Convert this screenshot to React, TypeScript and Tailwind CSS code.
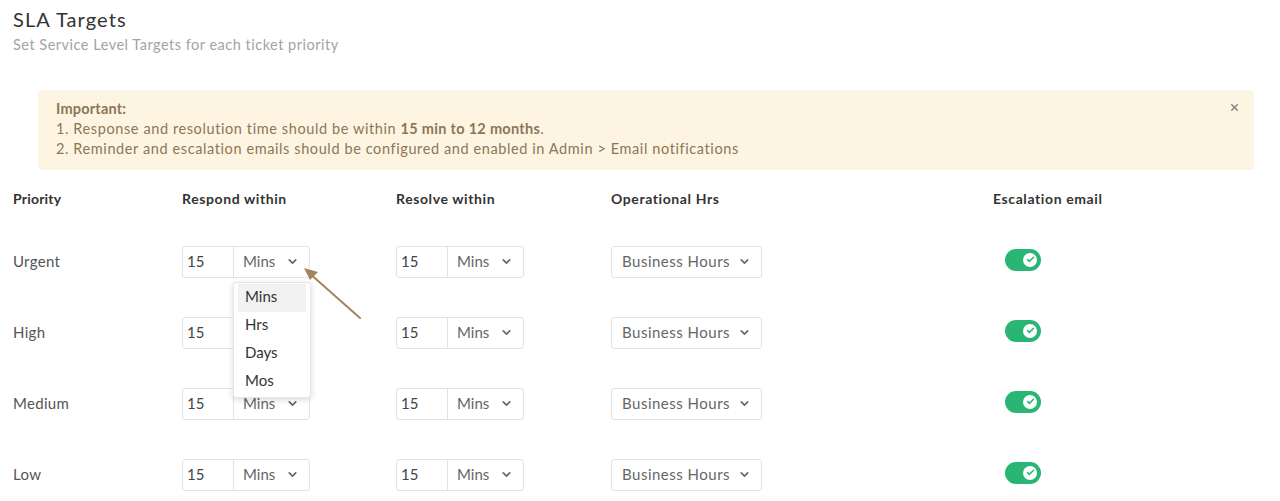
import React from 'react';
import { ChevronDown, X, Check } from 'lucide-react';

const rows = ['Urgent', 'High', 'Medium', 'Low'];

function UnitInput({ open = false }: { open?: boolean }) {
  return (
    <div className="relative flex h-[32px] w-[128px] rounded-[3px] border border-[#e3e3e3] bg-white">
      <div className="flex w-[51px] items-center border-r border-[#e3e3e3] pl-[4px] text-[15px] text-[#444]">15</div>
      <div className="flex flex-1 items-center justify-between pl-[9px] pr-[10px] text-[15px] text-[#666]">
        <span>Mins</span>
        <ChevronDown className="h-[13px] w-[13px] text-[#666]" strokeWidth={3} />
      </div>
      {open && (
        <div className="absolute left-[50px] top-[35px] z-20 w-[78px] rounded-[3px] border border-[#e6e6e6] bg-white px-[4px] py-[1px] shadow-[0_2px_6px_rgba(0,0,0,0.15)]">
          {['Mins', 'Hrs', 'Days', 'Mos'].map((o, i) => (
            <div
              key={o}
              className={`flex h-[28px] items-center pl-[7px] text-[15px] text-[#333] ${i === 0 ? 'bg-[#f2f2f2]' : ''}`}
            >
              <span className="-mt-[3px]">{o}</span>
            </div>
          ))}
        </div>
      )}
    </div>
  );
}

function Toggle() {
  return (
    <div className="ml-[12px] flex h-[22px] w-[36px] items-center justify-end rounded-full bg-[#29b574] pr-[4px]">
      <div className="flex h-[14px] w-[14px] items-center justify-center rounded-full bg-white">
        <Check className="h-[9px] w-[9px] text-[#29b574]" strokeWidth={4} />
      </div>
    </div>
  );
}

export default function App() {
  return (
    <div className="relative h-[501px] w-[1280px] overflow-hidden bg-white font-['Lato',sans-serif]">
      <div className="pl-[13px] pt-[5px]">
        <h1 className="text-[20px] leading-[28px] tracking-[1.1px] text-[#333]">SLA Targets</h1>
        <p className="mt-[3px] text-[14.5px] leading-[18px] tracking-[0.5px] text-[#a3a3a3]">
          Set Service Level Targets for each ticket priority
        </p>
      </div>

      <div className="relative ml-[38px] mt-[36px] h-[80px] w-[1216px] rounded-[4px] bg-[#fdf5e2] pl-[18px] pt-[9px] text-[14.5px] leading-[20px] tracking-[0.6px] text-[#8c7657]">
        <div className="font-bold tracking-[0.2px]">Important:</div>
        <div>
          1. Response and resolution time should be within <span className="font-bold tracking-[0.3px]">15 min to 12 months</span>.
        </div>
        <div>2. Reminder and escalation emails should be configured and enabled in Admin &gt; Email notifications</div>
        <X className="absolute right-[14px] top-[12px] h-[11px] w-[11px] text-[#8a8a8a]" strokeWidth={3.5} />
      </div>

      <div className="mt-[8px] grid h-[40px] grid-cols-[169px_214px_215px_382px_1fr] items-center pl-[13px] text-[14px] font-bold tracking-[0.6px] text-[#333]">
        <div className="tracking-[0.2px]">Priority</div>
        <div>Respond within</div>
        <div>Resolve within</div>
        <div>Operational Hrs</div>
        <div>Escalation email</div>
      </div>

      <div className="mt-[8px]">
        {rows.map((r, i) => (
          <div key={r} className="grid h-[71px] grid-cols-[169px_214px_215px_382px_1fr] items-center pl-[13px]">
            <div className="text-[15px] tracking-[0.3px] text-[#555]">{r}</div>
            <div className={i === 0 ? 'relative z-20' : ''}>
              <UnitInput open={i === 0} />
            </div>
            <div>
              <UnitInput />
            </div>
            <div>
              <div className="flex h-[32px] w-[151px] items-center justify-between rounded-[3px] border border-[#e3e3e3] pl-[10px] pr-[10px] text-[15px] tracking-[0.5px] text-[#666]">
                <span>Business Hours</span>
                <ChevronDown className="h-[13px] w-[13px] text-[#666]" strokeWidth={3} />
              </div>
            </div>
            <div className="-mt-[4px]">
              <Toggle />
            </div>
          </div>
        ))}
      </div>

      <svg className="absolute left-[298px] top-[262px] z-30" width="70" height="62" viewBox="0 0 70 62">
        <line x1="62" y1="56" x2="10" y2="10" stroke="#a3845f" strokeWidth="2" strokeLinecap="round" />
        <polygon points="6,6 20,10 12,18" fill="#a3845f" />
      </svg>
    </div>
  );
}
